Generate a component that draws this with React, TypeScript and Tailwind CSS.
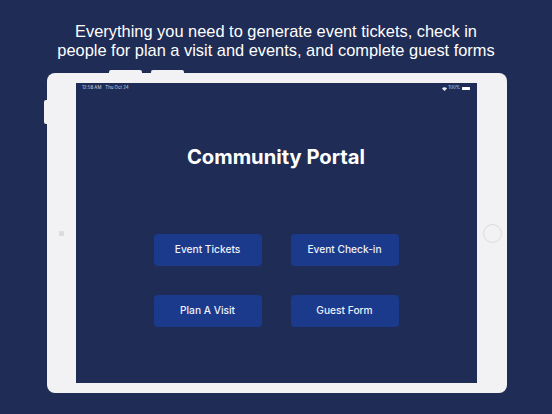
export default function App() {
  const buttons = ["Event Tickets", "Event Check-in", "Plan A Visit", "Guest Form"];
  return (
    <div className="w-[552px] h-[414px] overflow-hidden bg-[#1f2c55] flex flex-col items-center">
      <div className="mt-[22px] h-[51px] text-center text-white text-[16.4px] leading-[19px] font-['Liberation_Sans',sans-serif] whitespace-nowrap">
        <div>Everything you need to generate event tickets, check in</div>
        <div>people for plan a visit and events, and complete guest forms</div>
      </div>
      <div className="relative ml-[2px] w-[460px] h-[320px] shrink-0 bg-[#f2f2f5] rounded-[8px] flex items-center">
        <div className="absolute left-[62px] top-[-3px] w-[33px] h-[3px] bg-[#f2f2f5] rounded-t-[2px]" />
        <div className="absolute left-[104px] top-[-3px] w-[33px] h-[3px] bg-[#f2f2f5] rounded-t-[2px]" />
        <div className="absolute left-[-3px] top-[27px] w-[3px] h-[24px] bg-[#f2f2f5] rounded-l-[2px]" />
        <div className="w-[29px] flex justify-center">
          <div className="w-[5px] h-[5px] rounded-[1px] bg-[#dcdce0]" />
        </div>
        <div className="w-[401px] h-[300px] bg-[#1f2c55] flex flex-col font-['Inter',sans-serif] text-white">
          <div className="h-[9px] mt-[1px] flex items-center justify-between pl-[6px] pr-[7px] text-[4.4px] leading-none text-[#d5d9e6]">
            <div className="flex gap-[4px]">
              <span>12:58 AM</span>
              <span>Thu Oct 24</span>
            </div>
            <div className="flex items-center gap-[1px]">
              <svg width="5" height="4" viewBox="0 0 10 8">
                <path d="M0 2.8C2.8 0 7.2 0 10 2.8L5 8Z" fill="#e8eaf2" />
              </svg>
              <span>100%</span>
              <div className="ml-[1px] w-[8px] h-[3px] bg-white rounded-[0.5px]" />
            </div>
          </div>
          <div className="mt-[49px] pr-[1px] text-center font-bold text-[20.2px] leading-[30px]">Community Portal</div>
          <div className="mt-[62px] ml-[78px] grid grid-cols-[108px_108px] gap-x-[29px] gap-y-[29px]">
            {buttons.map((b) => (
              <div
                key={b}
                className="h-[32px] pr-[1px] rounded-[4px] bg-[#1b3a8c] flex items-center justify-center text-[10.2px] font-medium text-[#eef1f8]"
              >
                {b}
              </div>
            ))}
          </div>
        </div>
        <div className="w-[30px] flex justify-center">
          <div className="w-[19px] h-[19px] rounded-full border border-[#dcdce0]" />
        </div>
      </div>
    </div>
  );
}
